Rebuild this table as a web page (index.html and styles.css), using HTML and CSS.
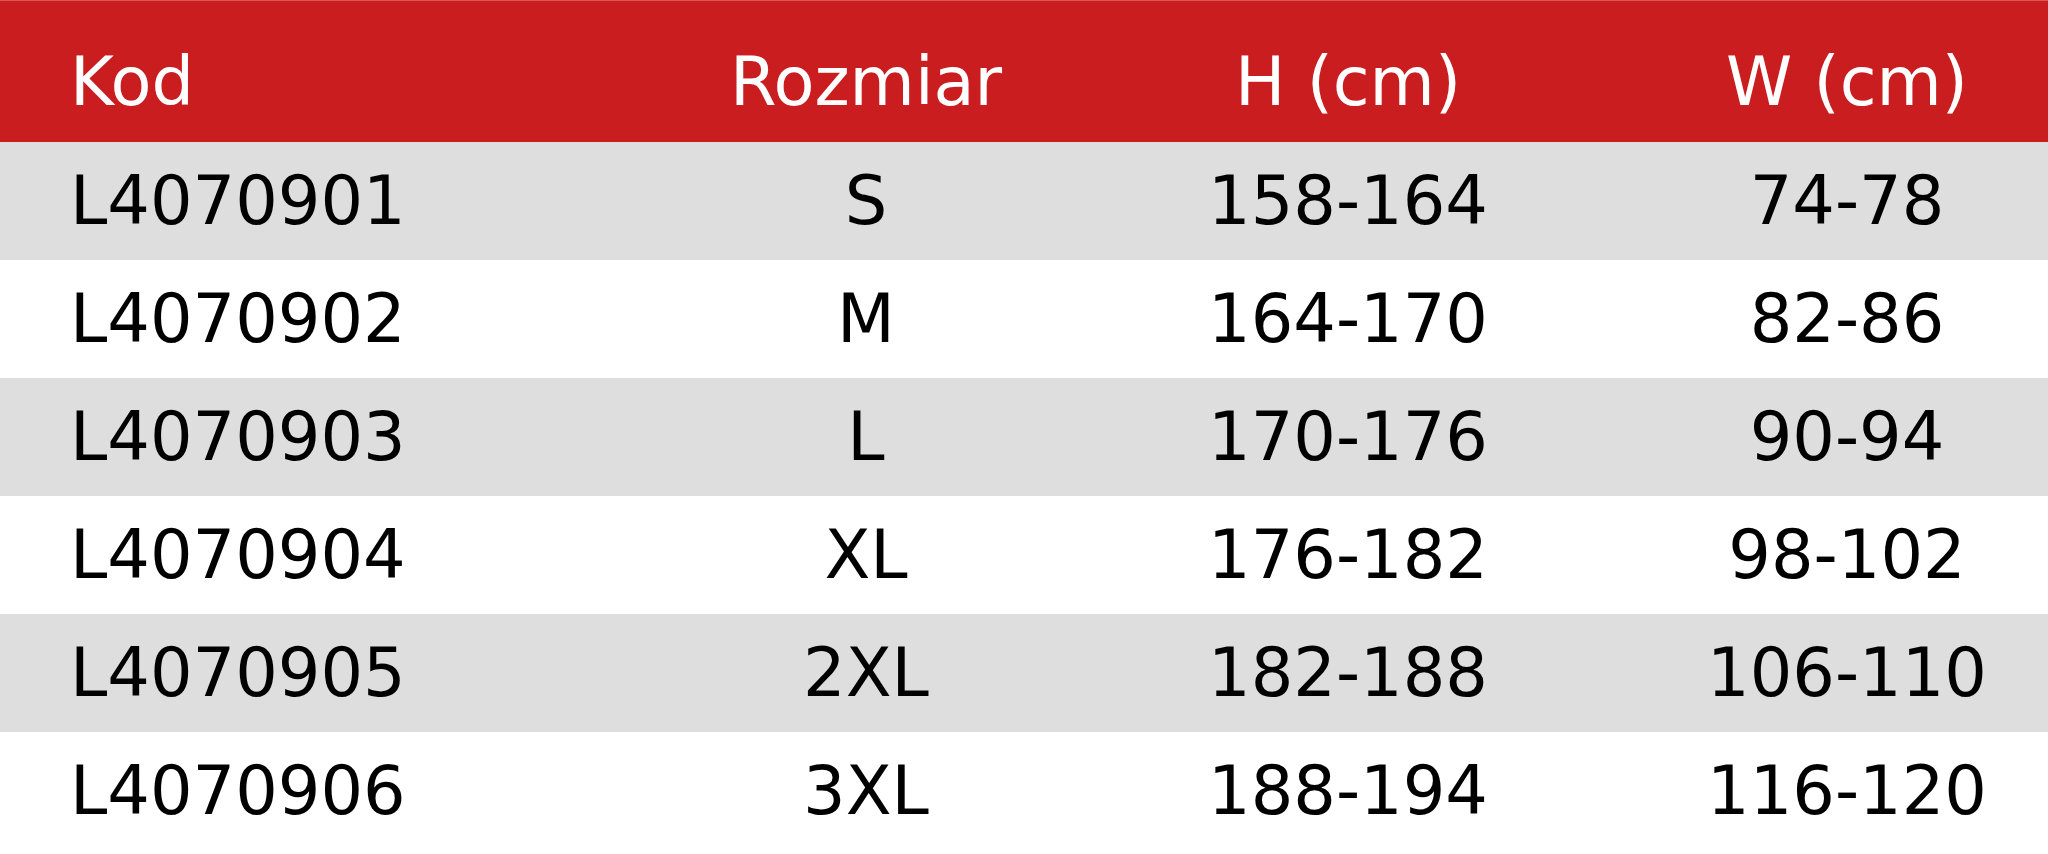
FILE: index.html
```html
<!DOCTYPE html>
<html lang="pl">
<head>
<meta charset="utf-8">
<title>Tabela rozmiarów</title>
<link rel="stylesheet" href="styles.css">
</head>
<body>
<div class="size-table">
  <div class="row head">
    <div class="cell code">Kod</div>
    <div class="cell">Rozmiar</div>
    <div class="cell">H (cm)</div>
    <div class="cell">W (cm)</div>
  </div>
  <div class="row shade">
    <div class="cell code">L4070901</div>
    <div class="cell">S</div>
    <div class="cell">158-164</div>
    <div class="cell">74-78</div>
  </div>
  <div class="row">
    <div class="cell code">L4070902</div>
    <div class="cell">M</div>
    <div class="cell">164-170</div>
    <div class="cell">82-86</div>
  </div>
  <div class="row shade">
    <div class="cell code">L4070903</div>
    <div class="cell">L</div>
    <div class="cell">170-176</div>
    <div class="cell">90-94</div>
  </div>
  <div class="row">
    <div class="cell code">L4070904</div>
    <div class="cell">XL</div>
    <div class="cell">176-182</div>
    <div class="cell">98-102</div>
  </div>
  <div class="row shade">
    <div class="cell code">L4070905</div>
    <div class="cell">2XL</div>
    <div class="cell">182-188</div>
    <div class="cell">106-110</div>
  </div>
  <div class="row">
    <div class="cell code">L4070906</div>
    <div class="cell">3XL</div>
    <div class="cell">188-194</div>
    <div class="cell">116-120</div>
  </div>
</div>
</body>
</html>
```

FILE: styles.css
```css
html, body {
  margin: 0;
  padding: 0;
  background: #ffffff;
}

body {
  width: 2048px;
  height: 854px;
  overflow: hidden;
  font-family: "DejaVu Sans", "Liberation Sans", sans-serif;
  font-size: 67px;
  color: #000000;
}

.size-table {
  display: flex;
  flex-direction: column;
}

.row {
  display: grid;
  grid-template-columns: 682px 368px 596px 402px;
  align-items: center;
  height: 118px;
  background: #ffffff;
}

.row.shade {
  background: #dedede;
}

.row.head {
  height: 121px;
  padding-top: 20px;
  border-top: 1px solid #e05455;
  background: #c91d1f;
  color: #ffffff;
}

.cell {
  text-align: center;
  white-space: nowrap;
  line-height: normal;
}

.cell.code {
  text-align: left;
  padding-left: 70px;
}
```
